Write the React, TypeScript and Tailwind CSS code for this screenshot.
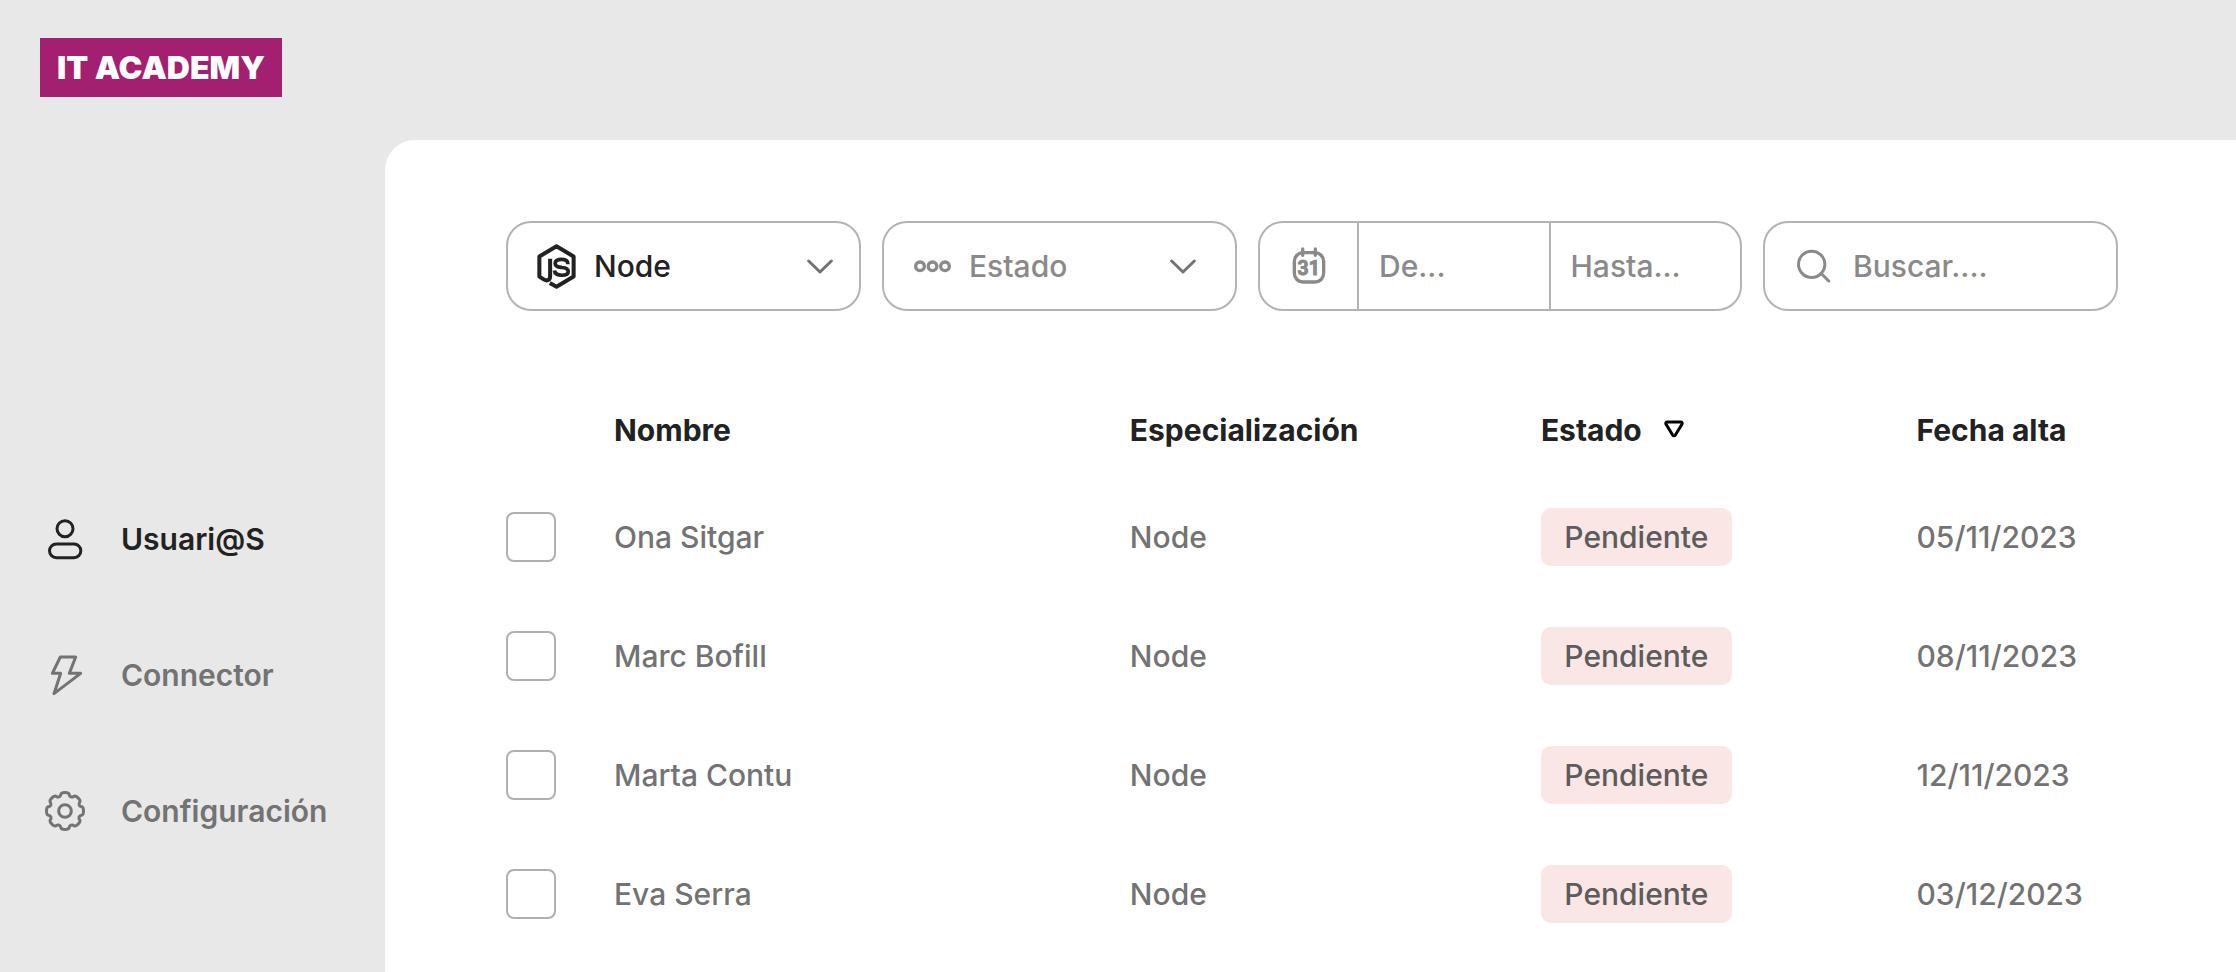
import React from "react";

type IconProps = { className?: string };

function UserIcon({ className }: IconProps) {
  return (
    <svg viewBox="0 0 120 126" className={className} fill="none" stroke="currentColor" strokeWidth="9" aria-hidden="true">
      <circle cx="60" cy="32" r="24" />
      <rect x="13.500" y="78" width="94" height="41" rx="20.500" />
    </svg>
  );
}

function BoltIcon({ className }: IconProps) {
  return (
    <svg viewBox="0 0 120 126" className={className} fill="none" stroke="currentColor" strokeWidth="9" strokeLinejoin="round" aria-hidden="true">
      <path d="M46 9H92L73 58H107L27 119L47 58H22Z" />
    </svg>
  );
}

// Builds an eight-lobed closed outline by rotating and mirroring half a lobe.
function gearOutline(): string {
  const half = [[0, -55.5], [8, -55.5], [11.5, -55], [12.5, -50], [12.8, -46], [14, -44], [17.6, -42.5]];
  const rot = ([x, y]: number[], deg: number) => {
    const a = (deg * Math.PI) / 180;
    return `${(x * Math.cos(a) - y * Math.sin(a)).toFixed(2)} ${(x * Math.sin(a) + y * Math.cos(a)).toFixed(2)}`;
  };
  let d = `M${rot(half[0], 0)}`;
  for (let i = 0; i < 8; i++) {
    const a = i * 45;
    const p = half.map((q) => rot(q, a));
    const m = half.map(([x, y]) => rot([-x, y], a + 45));
    d += `C${p[1]} ${p[2]} ${p[3]}C${p[4]} ${p[5]} ${p[6]}L${m[6]}C${m[5]} ${m[4]} ${m[3]}C${m[2]} ${m[1]} ${m[0]}`;
  }
  return d + "Z";
}

const GEAR = gearOutline();

function GearIcon({ className }: IconProps) {
  return (
    <svg viewBox="-60 -63 120 126" className={className} fill="none" stroke="currentColor" strokeWidth="9" strokeLinejoin="round" aria-hidden="true">
      <path d={GEAR} />
      <circle r="19" />
    </svg>
  );
}

function NodeIcon({ className }: IconProps) {
  return (
    <svg viewBox="0 0 116 134" className={className} fill="none" stroke="currentColor" strokeWidth="12" strokeLinejoin="round" aria-hidden="true">
      <path d="M39 44V95C39 108 30 111 21 106L7 97V37L58 7L109 37V97L58 127L38 116" />
      <path strokeWidth="11" d="M92 60C92 49 83 46 74 46C62 46 54 50 54 58C54 67 62 68 74 70C86 71 93 74 93 82C93 90 84 93 74 93C62 93 53 90 52 79" />
    </svg>
  );
}

function DotsIcon({ className }: IconProps) {
  return (
    <svg viewBox="0 0 111 39" className={className} fill="none" stroke="currentColor" strokeWidth="10" aria-hidden="true">
      <circle cx="18" cy="19" r="13" />
      <circle cx="55.500" cy="19" r="13" />
      <circle cx="93" cy="19" r="13" />
    </svg>
  );
}

function ChevronIcon({ className }: IconProps) {
  return (
    <svg viewBox="0 0 78 45" className={className} fill="none" stroke="currentColor" strokeWidth="9" strokeLinecap="round" strokeLinejoin="round" aria-hidden="true">
      <path d="M5 6L39 39L73 6" />
    </svg>
  );
}

function CalendarIcon({ className }: IconProps) {
  return (
    <svg viewBox="0 0 108 117" className={className} fill="none" stroke="currentColor" strokeWidth="10" strokeLinecap="round" aria-hidden="true">
      <rect x="10" y="17" width="88" height="88" rx="26" />
      <path d="M35 6V25M73 6V25" />
      <text x="53" y="83" textAnchor="middle" fill="currentColor" stroke="currentColor" strokeWidth="3" fontSize="58" className="font-['Liberation_Sans_Narrow','Roboto',sans-serif] font-bold">31</text>
    </svg>
  );
}

function SearchIcon({ className }: IconProps) {
  return (
    <svg viewBox="0 0 105 102" className={className} fill="none" stroke="currentColor" strokeWidth="9" strokeLinecap="round" aria-hidden="true">
      <circle cx="47" cy="46" r="39.500" />
      <path d="M77 75L98 96" />
    </svg>
  );
}

function SortIcon({ className }: IconProps) {
  return (
    <svg viewBox="0 0 20 20" className={className} fill="none" stroke="currentColor" strokeWidth="3" strokeLinejoin="round" aria-hidden="true">
      <path d="M3.500 2H16.500Q19 2 17.800 4.500L11.500 14.800Q10 16.800 8.500 14.800L2.200 4.500Q1 2 3.500 2Z" />
    </svg>
  );
}

const NAV = [
  { label: "Usuari@S", Icon: UserIcon, active: true },
  { label: "Connector", Icon: BoltIcon, active: false },
  { label: "Configuración", Icon: GearIcon, active: false },
];

const ROWS = [
  { name: "Ona Sitgar", track: "Node", status: "Pendiente", date: "05/11/2023" },
  { name: "Marc Bofill", track: "Node", status: "Pendiente", date: "08/11/2023" },
  { name: "Marta Contu", track: "Node", status: "Pendiente", date: "12/11/2023" },
  { name: "Eva Serra", track: "Node", status: "Pendiente", date: "03/12/2023" },
];

const FIELD = "flex h-[90px] min-w-0 items-center rounded-[25px] border-2 border-[#b3b3b3]";
const INPUT = "min-w-0 flex-1 bg-transparent outline-none placeholder:text-[#8a8a8a] placeholder:opacity-100";

export default function App() {
  return (
    <div className="flex min-h-screen flex-col bg-[#e8e8e8] font-['Inter','Liberation_Sans',sans-serif] text-[30px] leading-10 font-medium text-[#737373]">
      <header className="flex h-[140px] items-start px-10 pt-[38px]">
        <a href="#" className="flex h-[59px] w-[242px] items-center justify-center bg-[#a31f6f] text-[32px] font-black whitespace-nowrap text-white">
          IT ACADEMY
        </a>
      </header>

      <div className="flex flex-1">
        <nav className="w-[385px] shrink-0 pt-[331px]">
          <ul>
            {NAV.map(({ label, Icon, active }) => (
              <li key={label}>
                <a
                  href="#"
                  aria-current={active ? "page" : undefined}
                  className={`flex h-[136px] items-center gap-9 pl-[45px] font-semibold ${active ? "text-[#222222]" : "text-[#737373]"}`}
                >
                  <Icon className="h-[42px] w-10 shrink-0" />
                  {label}
                </a>
              </li>
            ))}
          </ul>
        </nav>

        <main className="min-w-0 flex-1 rounded-tl-[30px] bg-white pt-[81px] pr-[118px] pb-4 pl-[121px]">
          <form className="grid grid-cols-[355fr_355fr_484fr_355fr] gap-[21px]">
            <label className={`${FIELD} pr-[26px] pl-[29px] text-[#222222]`}>
              <NodeIcon className="mr-[18px] h-[45px] w-[39px] shrink-0" />
              <select aria-label="Especialización" className="min-w-0 flex-1 appearance-none bg-transparent outline-none">
                <option>Node</option>
              </select>
              <ChevronIcon className="pointer-events-none h-[15px] w-[26px] shrink-0 text-[#737373]" />
            </label>

            <label className={`${FIELD} pr-[39px] pl-[30px] text-[#8a8a8a]`}>
              <DotsIcon className="mr-[18px] h-[13px] w-[37px] shrink-0" />
              <select aria-label="Estado" className="min-w-0 flex-1 appearance-none bg-transparent outline-none">
                <option>Estado</option>
              </select>
              <ChevronIcon className="pointer-events-none h-[15px] w-[26px] shrink-0 text-[#737373]" />
            </label>

            <div className={`${FIELD} text-[#8a8a8a]`}>
              <div className="flex w-[97px] shrink-0 justify-center">
                <CalendarIcon className="h-[39px] w-9" />
              </div>
              <div className="flex h-full min-w-0 flex-1 items-center border-l-2 border-[#b3b3b3] pl-5">
                <input type="text" aria-label="Desde" placeholder="De..." className={INPUT} />
              </div>
              <div className="flex h-full min-w-0 flex-1 items-center border-l-2 border-[#b3b3b3] pl-5">
                <input type="text" aria-label="Hasta" placeholder="Hasta..." className={INPUT} />
              </div>
            </div>

            <label className={`${FIELD} px-[31px] text-[#8a8a8a]`}>
              <SearchIcon className="mr-[22px] h-[34px] w-[35px] shrink-0" />
              <input type="search" aria-label="Buscar" placeholder="Buscar...." className={INPUT} />
            </label>
          </form>

          <table className="mt-[71px] w-full table-fixed text-left">
            <thead>
              <tr className="h-[95px] font-bold text-[#222222]">
                <td className="w-[6.7%]" />
                <th scope="col" className="w-[32%]">Nombre</th>
                <th scope="col" className="w-[25.5%]">Especialización</th>
                <th scope="col" className="w-[23.3%]">
                  <button type="button" className="flex items-center gap-[22px]">
                    Estado
                    <SortIcon className="size-5 text-black" />
                  </button>
                </th>
                <th scope="col" className="whitespace-nowrap">Fecha alta</th>
              </tr>
            </thead>
            <tbody>
              {ROWS.map((row) => (
                <tr key={row.name} className="h-[119px]">
                  <td>
                    <input
                      type="checkbox"
                      aria-label={`Seleccionar ${row.name}`}
                      className="block size-[50px] appearance-none rounded-lg border-2 border-[#b0b0b0] bg-white checked:bg-[#a31f6f]"
                    />
                  </td>
                  <td>{row.name}</td>
                  <td>{row.track}</td>
                  <td>
                    <span className="flex h-[58px] w-[191px] items-center justify-center rounded-[10px] bg-[#fae6e4] text-[#5c5c5c]">
                      {row.status}
                    </span>
                  </td>
                  <td className="whitespace-nowrap">{row.date}</td>
                </tr>
              ))}
            </tbody>
          </table>
        </main>
      </div>
    </div>
  );
}
